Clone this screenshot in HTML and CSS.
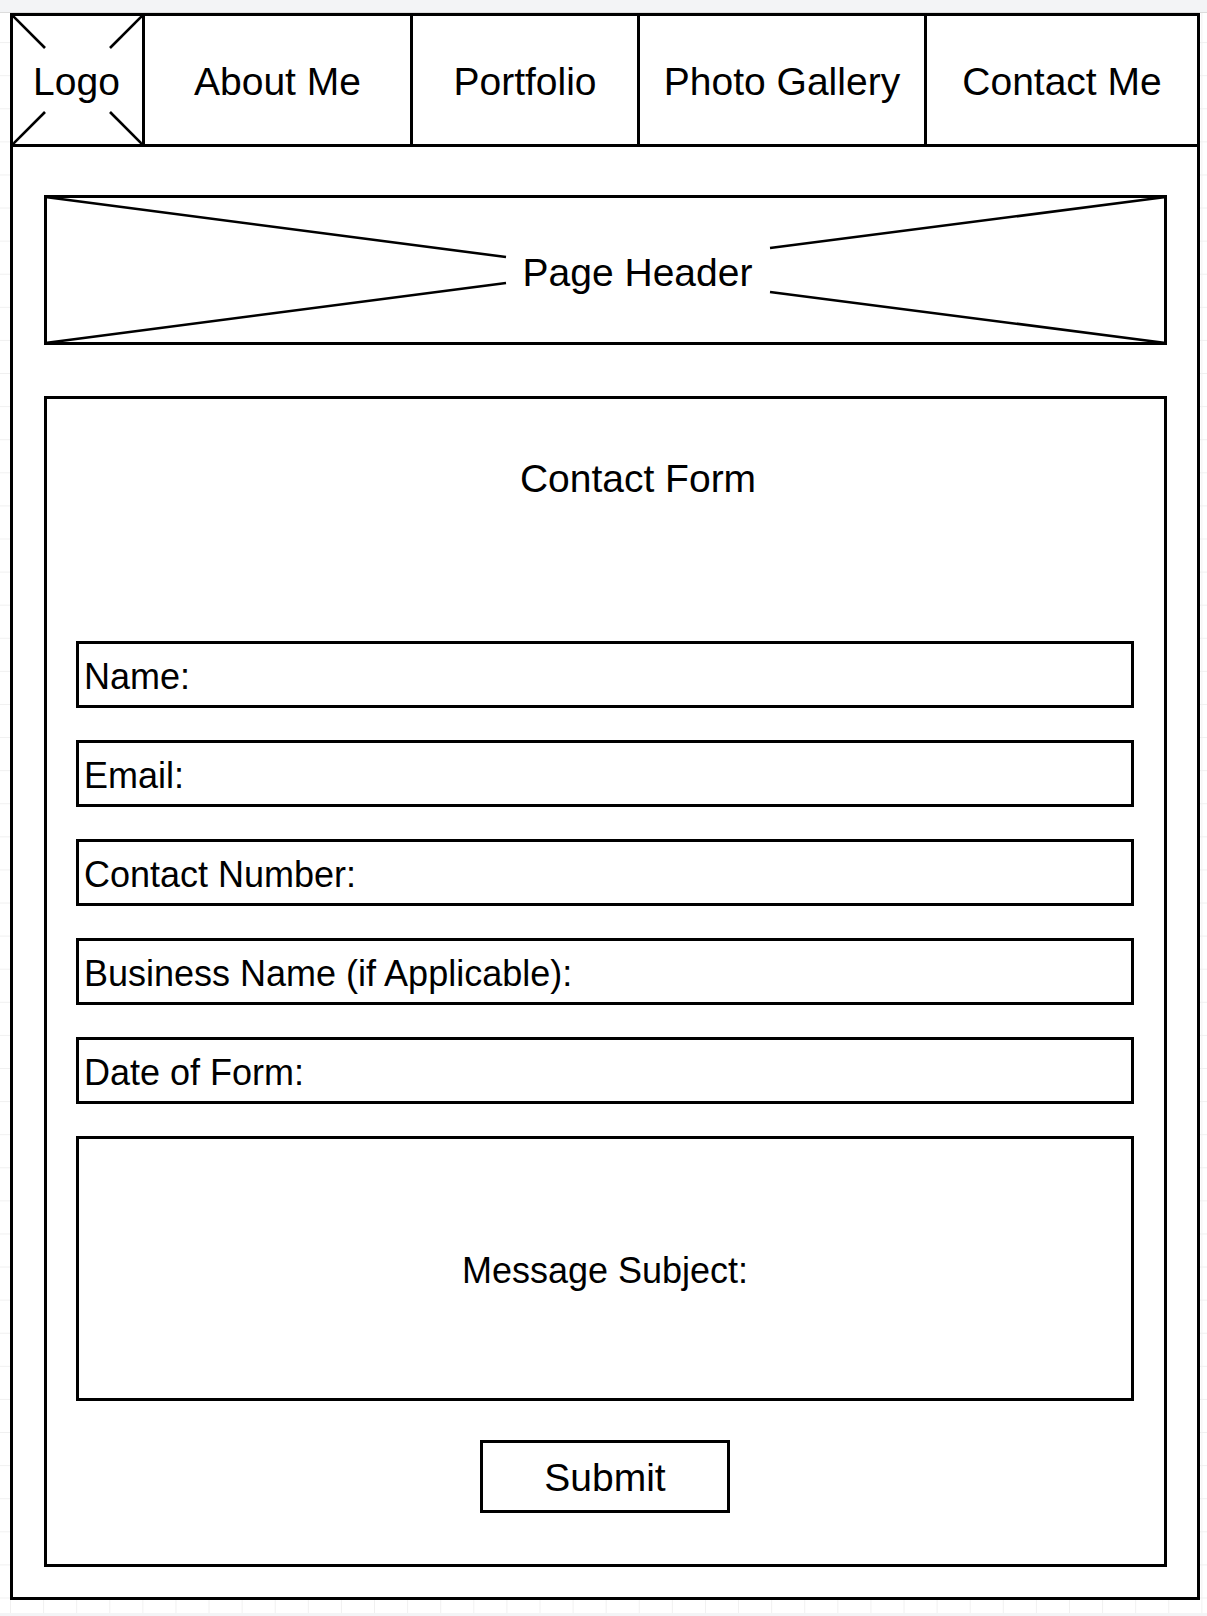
FILE: index.html
```html
<!DOCTYPE html>
<html lang="en">
<head>
    <meta charset="UTF-8">
    <meta name="viewport" content="width=device-width, initial-scale=1.0">
    <title>Contact Me - Wireframe</title>
    <link rel="stylesheet" href="styles.css">
</head>
<body>
    <div class="topbar"></div>
    <div class="frame">
        <nav class="nav">
            <div class="nav-item logo">
                <!-- image placeholder cross -->
                <svg class="logo-cross" viewBox="0 0 129 128" width="129" height="128">
                    <line x1="0" y1="0" x2="32" y2="32" />
                    <line x1="129" y1="0" x2="97" y2="32" />
                    <line x1="32" y1="96" x2="0" y2="128" />
                    <line x1="97" y1="96" x2="129" y2="128" />
                </svg>
                <span class="logo-text">Logo</span>
            </div>
            <div class="nav-item about">About Me</div>
            <div class="nav-item portfolio">Portfolio</div>
            <div class="nav-item gallery">Photo Gallery</div>
            <div class="nav-item contact">Contact Me</div>
        </nav>

        <main class="content">
            <div class="page-header">
                <svg class="header-cross" viewBox="0 0 1117 144" width="1117" height="144">
                    <line x1="-2" y1="-1" x2="459" y2="59" />
                    <line x1="-2" y1="145" x2="459" y2="85" />
                    <line x1="723" y1="50" x2="1119" y2="-1" />
                    <line x1="723" y1="94" x2="1119" y2="145" />
                </svg>
                <span class="header-title">Page Header</span>
            </div>

            <form class="contact-form">
                <h2 class="form-title">Contact Form</h2>
                <div class="field">Name:</div>
                <div class="field">Email:</div>
                <div class="field">Contact Number:</div>
                <div class="field">Business Name (if Applicable):</div>
                <div class="field">Date of Form:</div>
                <div class="field message">Message Subject:</div>
                <div class="submit-row">
                    <button type="button" class="submit">Submit</button>
                </div>
            </form>
        </main>
    </div>
    <div class="bottombar"></div>
</body>
</html>
```

FILE: styles.css
```css
body {
    margin: 0;
    font-family: "Liberation Sans", Arial, Helvetica, sans-serif;
    color: #000;
    background-color: #fff;
    background-image:
        linear-gradient(to right, #f0f0f0 1px, transparent 1px),
        linear-gradient(to bottom, #f0f0f0 1px, transparent 1px);
    background-size: 33.1px 33.1px;
    background-position: 10px 9px;
}
.topbar {
    height: 12px;
    background: #f3f4f6;
    border-bottom: 1px solid #dcdcdc;
}
.bottombar {
    height: 3px;
    margin-top: 13px;
    background: #f3f4f6;
}
.frame {
    width: 1190px;
    margin-left: 10px;
    border: 3px solid #000;
    box-sizing: border-box;
    background: #fff;
}

/* navigation */
.nav {
    display: flex;
    height: 131px;
    border-bottom: 3px solid #000;
    box-sizing: border-box;
}
.nav-item {
    display: flex;
    align-items: center;
    justify-content: center;
    padding-top: 4px;
    box-sizing: border-box;
    border-right: 3px solid #000;
    font-size: 39px;
    white-space: nowrap;
}
.logo {
    position: relative;
    width: 132px;
    padding-right: 2px;
}
.logo-cross {
    position: absolute;
    left: 0;
    top: 0;
}
.logo-cross line,
.header-cross line {
    stroke: #000;
    stroke-width: 2.6;
}
.logo-text {
    position: relative;
}
.about { width: 268px; }
.portfolio { width: 227px; }
.gallery { width: 287px; }
.contact {
    flex: 1;
    border-right: none;
}

/* main area */
.content {
    padding: 48px 30px 30px 31px;
}
.page-header {
    position: relative;
    height: 150px;
    border: 3px solid #000;
    box-sizing: border-box;
    display: flex;
    align-items: center;
    justify-content: center;
}
.header-cross {
    position: absolute;
    left: 0;
    top: 0;
}
.header-title {
    position: relative;
    padding-left: 64px;
    padding-top: 6px;
    font-size: 39px;
}

/* form */
.contact-form {
    margin-top: 51px;
    border: 3px solid #000;
    padding: 57px 30px 51px 29px;
    display: flex;
    flex-direction: column;
    gap: 32px;
}
.form-title {
    margin: 0 0 108px;
    padding-left: 66px;
    font-size: 39px;
    font-weight: normal;
    line-height: 45px;
    text-align: center;
}
.field {
    height: 67px;
    border: 3px solid #000;
    box-sizing: border-box;
    padding: 4px 3px 0 5px;
    display: flex;
    align-items: center;
    font-size: 36px;
    white-space: nowrap;
}
.field.message {
    height: 265px;
    justify-content: center;
    padding: 4px 0 0;
}
.submit-row {
    display: flex;
    justify-content: center;
    margin-top: 7px;
}
.submit {
    width: 250px;
    height: 73px;
    border: 3px solid #000;
    background: #fff;
    font-family: inherit;
    font-size: 39px;
    color: #000;
    padding: 2px 0 0;
}
```
